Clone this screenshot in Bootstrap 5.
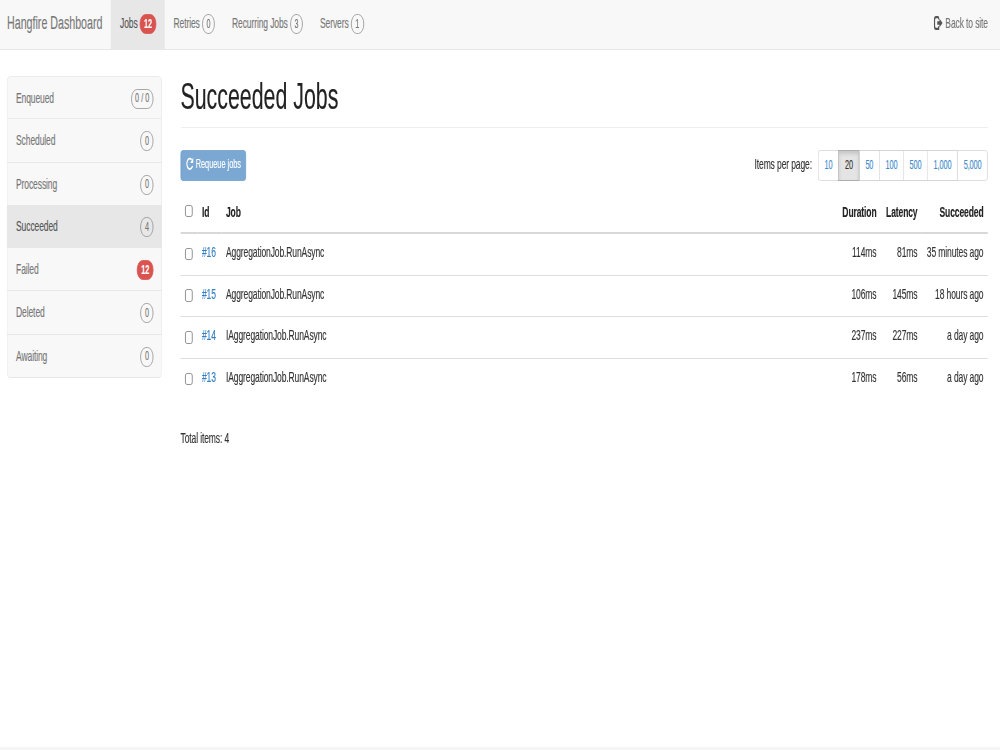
<!DOCTYPE html>
<html lang="en">
<head>
<meta charset="utf-8">
<meta name="viewport" content="width=device-width, initial-scale=1">
<title>Succeeded Jobs - Hangfire Dashboard</title>
<link href="https://cdn.jsdelivr.net/npm/bootstrap@5.3.0/dist/css/bootstrap.min.css" rel="stylesheet">
<style>
  html, body { height: 100%; overflow: hidden; }
  body { font-family: "Liberation Sans", Arial, sans-serif; background: #fff; }
  .viewport { width: 1000px; height: 750px; overflow: hidden; }
  /* The whole page is drawn condensed; --u is one on-screen pixel of width */
  .page { --u: calc(1px / .568); width: calc(1000 * var(--u)); height: 750px;
    transform: scaleX(.568); transform-origin: 0 0; font-size: 15px; letter-spacing: -.2px; line-height: 20px; color: #333; -webkit-text-stroke: .15px; }
  a { text-decoration: none; color: #337ab7; }
  .topbar { height: 50px; background: #f8f8f8; border-bottom: 1px solid #e7e7e7; padding: 0; }
  .topbar a { color: #777; height: 50px; display: flex; align-items: center; white-space: nowrap; padding-bottom: 4px; }
  .topbar .brand-link { width: calc(111 * var(--u)); padding-left: calc(7 * var(--u)); font-size: 18.8px; letter-spacing: 0; }
  .topbar .tab-link { padding-left: calc(9 * var(--u)); }
  .topbar .tab-link.active { background: #e7e7e7; color: #555; }
  .metric { display: inline-flex; align-items: center; justify-content: center; height: 20px; border: 1.3px solid #919191;
    border-radius: 11px; font-size: 12.8px; letter-spacing: 0; line-height: 1; color: #777; width: calc(13 * var(--u)); flex: none; }
  .metric.danger { background: #d9534f; border-color: #d9534f; color: #fff; font-weight: 700; width: calc(16.5 * var(--u)); }
  .topbar .metric { position: relative; top: 1px; }
  .side { width: calc(155 * var(--u)); margin-left: calc(7 * var(--u)); margin-top: 26px; height: 303px; }
  .side .list-group-item { height: 43.25px; background: #f8f8f8; border-color: #e7e7e7; color: #777;
    padding: 0 calc(8 * var(--u)) 0 calc(8.5 * var(--u)); }
  .side .list-group-item.active { background: #e7e7e7; color: #555; z-index: auto; }
  .side .list-group-item .metric { margin-top: 2px; }
  .main { width: calc(807.5 * var(--u)); margin-left: calc(18.5 * var(--u)); }
  h1 { font-size: 37.6px; letter-spacing: 0; line-height: 42px; font-weight: 400; color: #222; margin: 25px 0 0; height: 53px; border-bottom: 1px solid #eee; }
  .requeue { width: calc(65.5 * var(--u)); height: 31px; padding: 0 0 3px; background: #7aa8d2; border: 1px solid #6f9fcb; color: #fff;
    border-radius: 4px; font-size: 12.9px; display: flex; align-items: center; justify-content: center; }
  .pages { height: 31px; margin-left: calc(6 * var(--u)); }
  .pages .btn { padding: 0 0 2px; font-size: 12.9px; color: #428bca; border: 1px solid #d5d5d5; background: #fff; border-radius: 4px;
    display: flex; align-items: center; justify-content: center; flex: none; }
  .pages .btn.active { background: #e4e4e4; border-color: #adadad; color: #333; box-shadow: inset 0 3px 5px rgba(0,0,0,.125); }
  .w20 { width: calc(21 * var(--u)); } .w24 { width: calc(24.5 * var(--u)); } .w30 { width: calc(30.7 * var(--u)); }
  .jobs { table-layout: fixed; margin: 11px 0 0; color: #333; --bs-table-bg: transparent; }
  .jobs th, .jobs td { padding: 0 calc(4.5 * var(--u)); white-space: nowrap; vertical-align: middle; color: #333; border-bottom: 0; }
  .jobs th { height: 41px; color: #222; }
  .jobs td { height: 41.6px; border-top: 1px solid #ddd; padding-bottom: 5px; }
  .jobs tbody tr:first-child td { height: 42.4px; border-top: 2px solid #d8d8d8; }
  .jobs thead { border: 0; }
  .jobs a { color: #337fc0; }
  .tick { display: block; width: calc(7.6 * var(--u)); height: 12.5px; border: 1.3px solid #777; border-radius: 3px; background: #fff; }
  td .tick { margin-top: 4px; } th .tick { margin-bottom: 2px; }
  .foot { position: absolute; left: 0; right: 0; bottom: 0; height: 3px; background: #f5f5f5; }
</style>
</head>
<body>
<div class="viewport">
<div class="page position-relative">
  <nav class="topbar d-flex">
    <a class="brand-link" href="#">Hangfire Dashboard</a>
    <a class="tab-link active" href="#" style="width:calc(53.5 * var(--u))">Jobs<span class="metric danger ms-1">12</span></a>
    <a class="tab-link" href="#" style="width:calc(58.5 * var(--u))">Retries<span class="metric ms-1">0</span></a>
    <a class="tab-link" href="#" style="width:calc(88 * var(--u))">Recurring Jobs<span class="metric ms-1">3</span></a>
    <a class="tab-link" href="#">Servers<span class="metric ms-1">1</span></a>
    <a class="ms-auto" href="#" style="margin-right:calc(12 * var(--u))">
      <svg width="16" height="14" viewBox="0 0 17 14" preserveAspectRatio="none" class="me-1" aria-hidden="true"><path d="M9 1.2H4Q1.3 1.2 1.3 4v6q0 2.8 2.7 2.8h5v-2.5" fill="none" stroke="#555" stroke-width="2.3"/><path d="M9 1v2.5" stroke="#555" stroke-width="2"/><path d="M6.5 5.2h4V2.6L16.5 7l-6 4.4V8.8h-4z" fill="#555"/></svg>Back to site</a>
  </nav>
  <div class="d-flex align-items-start">
    <div class="side list-group">
      <a href="#" class="list-group-item d-flex align-items-center justify-content-between">Enqueued<span class="metric" style="width:calc(22.5 * var(--u))">0 / 0</span></a>
      <a href="#" class="list-group-item d-flex align-items-center justify-content-between">Scheduled<span class="metric">0</span></a>
      <a href="#" class="list-group-item d-flex align-items-center justify-content-between">Processing<span class="metric">0</span></a>
      <a href="#" class="list-group-item active d-flex align-items-center justify-content-between">Succeeded<span class="metric">4</span></a>
      <a href="#" class="list-group-item d-flex align-items-center justify-content-between">Failed<span class="metric danger">12</span></a>
      <a href="#" class="list-group-item d-flex align-items-center justify-content-between">Deleted<span class="metric">0</span></a>
      <a href="#" class="list-group-item d-flex align-items-center justify-content-between">Awaiting<span class="metric">0</span></a>
    </div>
    <main class="main">
      <h1>Succeeded Jobs</h1>
      <div class="d-flex align-items-center" style="margin-top:22px">
        <button class="btn requeue"><svg width="14" height="14" viewBox="0 0 14 14" class="me-1" aria-hidden="true"><path d="M10.5 2.8A5.2 5.2 0 1 0 12 8.8" fill="none" stroke="#fff" stroke-width="1.9"/><path d="M13.3.6v5.4H8z" fill="#fff"/></svg>Requeue jobs</button>
        <span class="ms-auto pb-1">Items per page:</span>
        <div class="btn-group pages">
          <a class="btn w20" href="#">10</a><a class="btn w20 active" href="#">20</a><a class="btn w20" href="#">50</a><a class="btn w24" href="#">100</a><a class="btn w24" href="#">500</a><a class="btn w30" href="#">1,000</a><a class="btn w30" href="#">5,000</a>
        </div>
      </div>
      <table class="table jobs">
        <colgroup><col style="width:calc(17 * var(--u))"><col style="width:calc(24 * var(--u))"><col><col style="width:calc(50 * var(--u))"><col style="width:calc(41 * var(--u))"><col style="width:calc(66 * var(--u))"></colgroup>
        <thead><tr><th><span class="tick"></span></th><th>Id</th><th>Job</th><th class="text-end">Duration</th><th class="text-end">Latency</th><th class="text-end">Succeeded</th></tr></thead>
        <tbody>
          <tr><td><span class="tick"></span></td><td><a href="#">#16</a></td><td>AggregationJob.RunAsync</td><td class="text-end">114ms</td><td class="text-end">81ms</td><td class="text-end">35 minutes ago</td></tr>
          <tr><td><span class="tick"></span></td><td><a href="#">#15</a></td><td>AggregationJob.RunAsync</td><td class="text-end">106ms</td><td class="text-end">145ms</td><td class="text-end">18 hours ago</td></tr>
          <tr><td><span class="tick"></span></td><td><a href="#">#14</a></td><td>IAggregationJob.RunAsync</td><td class="text-end">237ms</td><td class="text-end">227ms</td><td class="text-end">a day ago</td></tr>
          <tr><td><span class="tick"></span></td><td><a href="#">#13</a></td><td>IAggregationJob.RunAsync</td><td class="text-end">178ms</td><td class="text-end">56ms</td><td class="text-end">a day ago</td></tr>
        </tbody>
      </table>
      <div style="margin-top:27.5px">Total items: 4</div>
    </main>
  </div>
  <div class="foot"></div>
</div>
</div>
<script src="https://cdn.jsdelivr.net/npm/bootstrap@5.3.0/dist/js/bootstrap.bundle.min.js"></script>
</body>
</html>
